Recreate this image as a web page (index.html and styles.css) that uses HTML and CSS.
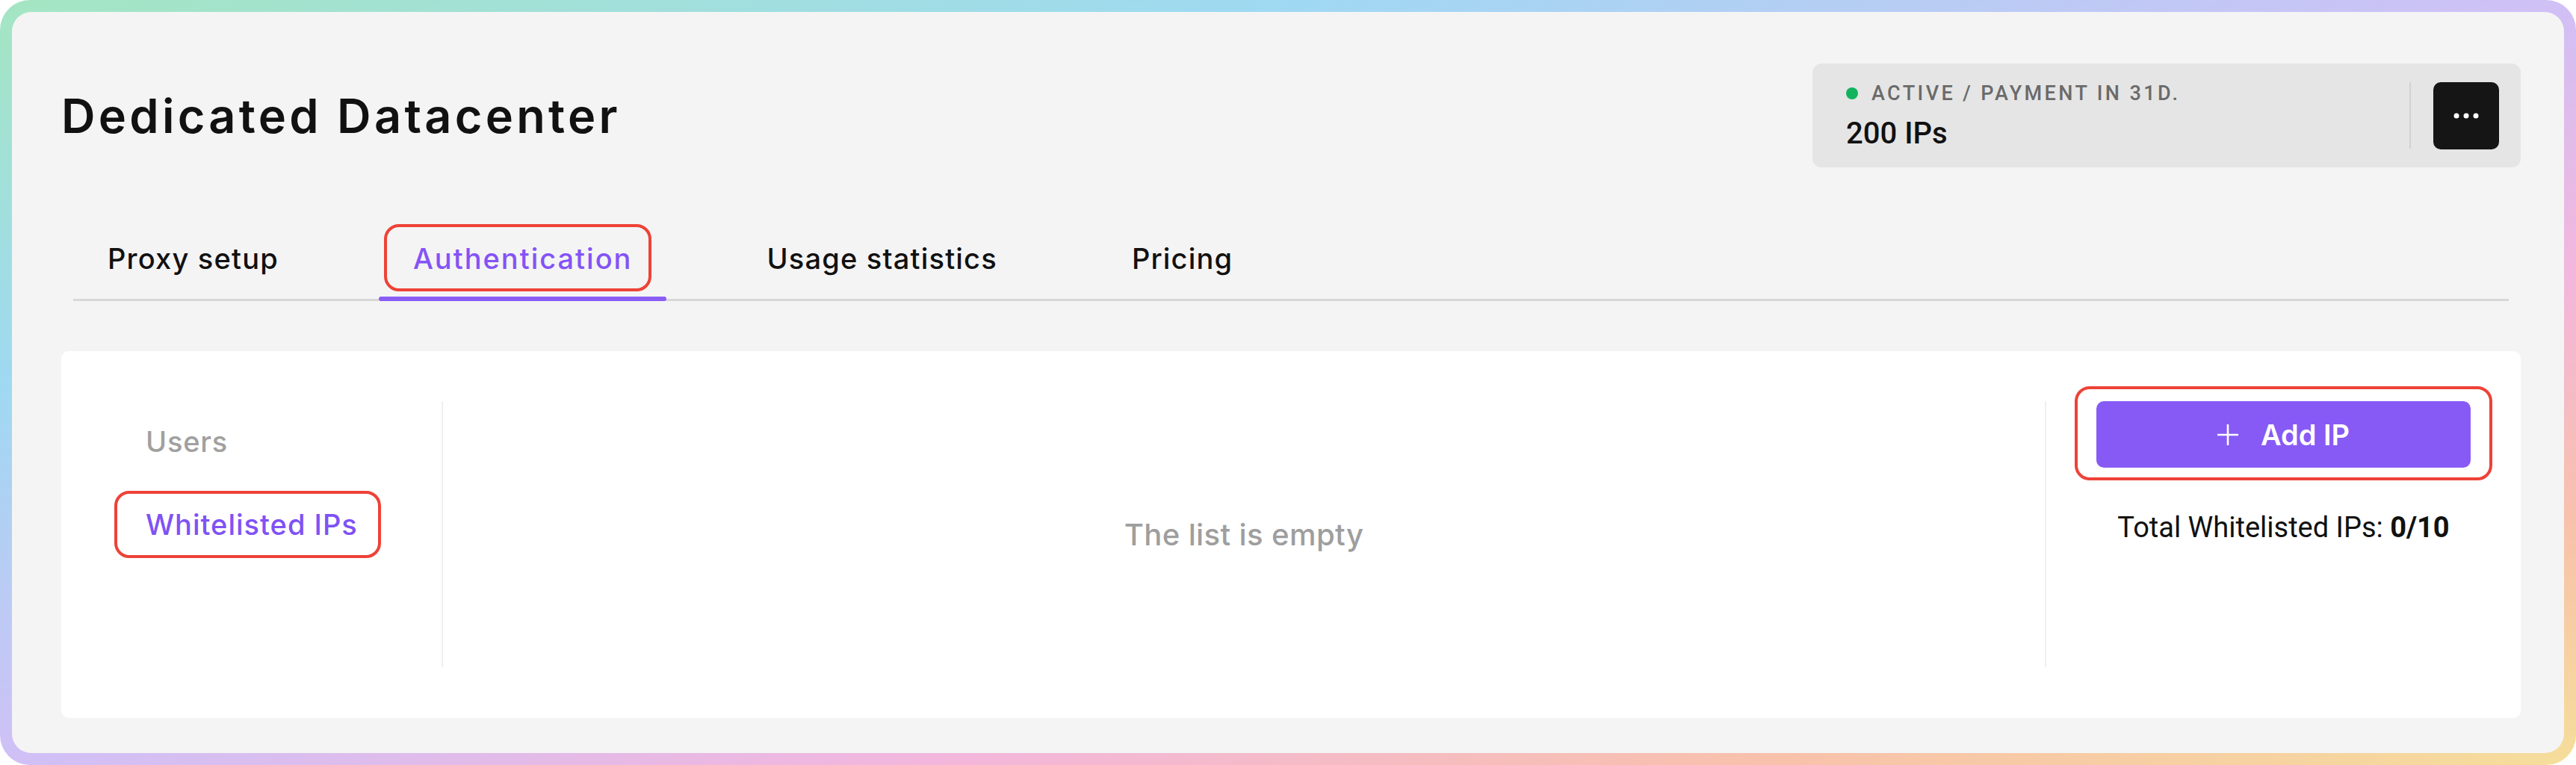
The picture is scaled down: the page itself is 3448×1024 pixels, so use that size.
FILE: index.html
```html
<!DOCTYPE html>
<html lang="en">
<head>
<meta charset="utf-8">
<title>Dedicated Datacenter</title>
<link rel="stylesheet" href="styles.css">
</head>
<body>
<div class="frame">
  <div class="panel">
    <header class="header">
      <h1 class="title">Dedicated Datacenter</h1>
      <div class="status-card">
        <div class="status-info">
          <div class="status-line"><span class="dot"></span><span class="status-text">ACTIVE / PAYMENT IN 31D.</span></div>
          <div class="ip-count">200 IPs</div>
        </div>
        <div class="status-divider"></div>
        <button class="more-btn" type="button" aria-label="More">
          <svg width="34" height="8" viewBox="0 0 34 8"><circle cx="4" cy="4" r="3.5" fill="#fff"/><circle cx="17" cy="4" r="3.5" fill="#fff"/><circle cx="30" cy="4" r="3.5" fill="#fff"/></svg>
        </button>
      </div>
    </header>

    <nav class="tabs">
      <a class="tab">Proxy setup</a>
      <a class="tab active">Authentication<span class="mark mark-tab"></span></a>
      <a class="tab">Usage statistics</a>
      <a class="tab">Pricing</a>
    </nav>

    <section class="card">
      <div class="side">
        <div class="side-item">Users</div>
        <div class="side-item active">Whitelisted IPs<span class="mark mark-side"></span></div>
      </div>
      <div class="vdiv"></div>
      <div class="empty">The list is empty</div>
      <div class="vdiv"></div>
      <div class="actions">
        <button class="add-btn" type="button">
          <svg width="28" height="28" viewBox="0 0 28 28"><path d="M14 0V28M0 14H28" stroke="#fff" stroke-width="2.6" fill="none"/></svg>
          <span>Add IP</span>
          <span class="mark mark-btn"></span>
        </button>
        <div class="total">Total Whitelisted IPs: <b>0/10</b></div>
      </div>
    </section>
  </div>
</div>
</body>
</html>
```
FILE: styles.css
```css
* { box-sizing: border-box; margin: 0; padding: 0; }
html, body { width: 3448px; height: 1024px; background: #ffffff; overflow: hidden; }
body { font-family: Inter, "Open Sans", sans-serif; color: #121212; }

.frame {
  width: 3448px;
  height: 1024px;
  border-radius: 40px;
  padding: 16px;
  background: linear-gradient(to bottom right, #a4e6c2 0%, #9fd9f2 25%, #d0c0f6 50%, #f3b6dc 68%, #f8c1ab 84%, #f5de9a 100%);
}
.panel {
  height: 100%;
  background: #f4f4f4;
  border-radius: 26px;
  padding: 69px 58px 0 66px;
}

/* header */
.header { display: flex; align-items: center; justify-content: space-between; height: 139px; }
.title { font-size: 63px; font-weight: 600; line-height: 76px; color: #111111; letter-spacing: 4.3px; }

.status-card {
  width: 948px;
  height: 139px;
  background: #e5e5e5;
  border-radius: 12px;
  display: flex;
  align-items: center;
  padding: 0 29px 0 45px;
}
.status-info { flex: 1; padding-top: 3px; font-family: Roboto, "Liberation Sans", sans-serif; }
.status-line { display: flex; align-items: center; gap: 18px; height: 32px; }
.dot { width: 16px; height: 16px; border-radius: 50%; background: #12b35e; }
.status-text { font-size: 27px; font-weight: 500; letter-spacing: 3.4px; color: #6a6a6a; line-height: 32px; }
.ip-count { font-size: 40px; font-weight: 500; line-height: 48px; color: #111111; margin-top: 14px; }
.status-divider { width: 2px; height: 89px; background: #d2d2d2; margin-right: 30px; }
.more-btn {
  width: 88px; height: 90px; border: none; border-radius: 10px;
  background: #151515; display: flex; align-items: center; justify-content: center;
}

/* tabs */
.tabs {
  display: flex;
  gap: 88px;
  margin: 99px 16px 0;
  border-bottom: 3px solid #d8d8d8;
}
.tab {
  position: relative;
  padding: 0 46px 31px;
  font-size: 38px;
  font-weight: 500;
  line-height: 46px;
  color: #111111;
  letter-spacing: 1.2px;
}
.tab.active { color: #8453f5; letter-spacing: 2px; }
.tab.active::after {
  content: "";
  position: absolute;
  left: 0; right: 0; bottom: -3px;
  height: 6px;
  border-radius: 3px;
  background: #8a5cf6;
}

/* red annotation outlines */
.mark {
  position: absolute;
  border: 4px solid #ee4237;
  border-radius: 20px;
  pointer-events: none;
}
.mark-tab { left: 7px; width: 358px; top: -23px; height: 90px; }
.mark-side { left: -42px; width: 357px; top: -22px; height: 90px; }
.mark-btn { left: -29px; right: -29px; top: -20px; bottom: -17px; }

/* card */
.card {
  margin-top: 67px;
  height: 491px;
  background: #ffffff;
  border-radius: 10px;
  padding: 67px 0 68px;
  display: flex;
}
.side {
  width: 509px;
  padding: 31px 0 0 113px;
  display: flex;
  flex-direction: column;
  align-items: flex-start;
  gap: 65px;
}
.side-item {
  position: relative;
  font-size: 38px;
  font-weight: 500;
  line-height: 46px;
  color: #a0a0a0;
  letter-spacing: 0.8px;
}
.side-item.active { color: #7f52f5; letter-spacing: 1px; }
.vdiv { width: 2px; background: #f0f0f0; }
.empty {
  flex: 1;
  display: flex;
  align-items: center;
  justify-content: center;
  font-size: 40px;
  font-weight: 500;
  color: #9e9e9e;
  letter-spacing: 0.4px;
}
.actions { width: 635px; padding: 0 67px; }
.add-btn {
  position: relative;
  width: 100%;
  height: 89px;
  border: none;
  border-radius: 10px;
  background: #875af5;
  color: #ffffff;
  font-family: Inter, "Open Sans", sans-serif;
  font-size: 38px;
  font-weight: 600;
  display: flex;
  align-items: center;
  justify-content: center;
  gap: 30px;
}
.total {
  margin-top: 57px;
  font-family: Roboto, "Liberation Sans", sans-serif;
  font-size: 38px;
  line-height: 46px;
  text-align: center;
  color: #111111;
}
.total b { font-weight: 700; }
```
